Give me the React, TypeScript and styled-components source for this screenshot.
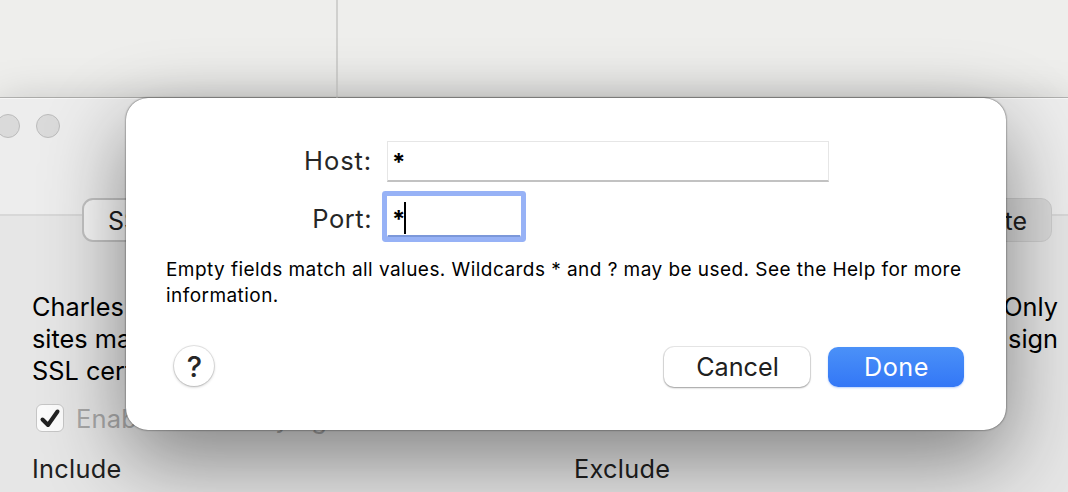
import React from "react";
import styled, { createGlobalStyle } from "styled-components";

const GlobalStyle = createGlobalStyle`
  * { box-sizing: border-box; }
  body { margin: 0; font-family: Inter, "Liberation Sans", sans-serif; overflow: hidden; }
`;

const Desktop = styled.div`
  position: relative;
  width: 1068px;
  height: 492px;
  overflow: hidden;
  background: #eeeeec;
`;

const BackPanes = styled.div`
  display: flex;
  height: 98px;
`;

const Pane = styled.div<{ $width?: number }>`
  flex: ${(p) => (p.$width ? `0 0 ${p.$width}px` : "1")};
  border-right: ${(p) => (p.$width ? "2px solid #d0d0ce" : "none")};
`;

const SettingsWindow = styled.section`
  height: 394px;
  background: #e6e6e6;
  border-top: 1px solid #f6f6f6;
  box-shadow: 0 0 0 1px rgba(0, 0, 0, 0.22), 0 10px 44px rgba(0, 0, 0, 0.26);
`;

const TitleBar = styled.div`
  display: flex;
  gap: 16px;
  height: 100px;
  padding-top: 15px;
  margin-left: -4px;
`;

const TrafficLight = styled.span`
  width: 24px;
  height: 24px;
  border-radius: 50%;
  background: #dadada;
  border: 1px solid #bcbcbc;
`;

const Header = styled.div`
  height: 117px;
  background: #ededed;
  border-bottom: 2px solid #d8d8d8;
`;

const TabStrip = styled.div`
  display: flex;
  justify-content: space-between;
  height: 44px;
  margin: -18px 16px 0 82px;
`;

const Tab = styled.div<{ $active?: boolean }>`
  display: flex;
  align-items: center;
  justify-content: ${(p) => (p.$active ? "flex-start" : "flex-end")};
  width: 300px;
  padding: ${(p) => (p.$active ? "2px 24px 0" : "2px 24px 0")};
  font-size: 25px;
  color: #1e1e1e;
  border-radius: 11px;
  background: ${(p) => (p.$active ? "#f8f8f8" : "#dadada")};
  border: ${(p) => (p.$active ? "2px solid #c4c4c4" : "1px solid #cecece")};
`;

const Description = styled.div`
  display: flex;
  justify-content: space-between;
  margin: 49px 10px 0 32px;
  font-size: 25.3px;
  line-height: 32px;
  color: #000;
`;

const Lines = styled.div<{ $end?: boolean }>`
  display: flex;
  flex-direction: column;
  align-items: ${(p) => (p.$end ? "flex-end" : "flex-start")};
`;

const CheckRow = styled.div`
  display: flex;
  align-items: center;
  gap: 12px;
  height: 30px;
  margin: 16px 0 0 36px;
  font-size: 25.5px;
  letter-spacing: 0.15px;
  color: #a8a8a8;
`;

const Checkbox = styled.span`
  display: flex;
  width: 28px;
  height: 28px;
  border-radius: 6px;
  background: #fbfbfb;
  border: 1px solid #c6c6c6;
`;

const ListHeadings = styled.div`
  display: flex;
  margin: 20px 0 0 32px;
  font-size: 25.3px;
  line-height: 32px;
  letter-spacing: 0.3px;
  color: #202020;
`;

const ListHeading = styled.span`
  flex: 0 0 542px;
`;

const Sheet = styled.form`
  position: absolute;
  left: 126px;
  top: 98px;
  width: 880px;
  height: 332px;
  padding: 43px 42px 0 40px;
  border-radius: 22px;
  background: #fff;
  box-shadow: 0 0 2px rgba(0, 0, 0, 0.75), 0 30px 82px rgba(0, 0, 0, 0.44);
`;

const Field = styled.div<{ $last?: boolean }>`
  display: flex;
  align-items: center;
  height: 41px;
  margin-bottom: ${(p) => (p.$last ? 0 : 14)}px;
`;

const Label = styled.label<{ $shift: string; $spacing: number }>`
  width: 206px;
  margin-right: 15px;
  padding: ${(p) => p.$shift};
  text-align: right;
  white-space: nowrap;
  font-size: 25.5px;
  letter-spacing: ${(p) => p.$spacing}px;
  color: #262626;
`;

const Input = styled.div<{ $width: number; $focused?: boolean }>`
  display: flex;
  align-items: center;
  width: ${(p) => p.$width}px;
  height: 41px;
  padding-left: 4px;
  font-size: 24px;
  font-weight: 700;
  color: #000;
  border: 1px solid #e6e6e6;
  border-bottom: 2px solid #c2c2c2;
  ${(p) =>
    p.$focused &&
    `border-color: #fff; border-bottom-color: #7c98da;
     border-radius: 1px; box-shadow: 0 0 0 5px #97b2f6;`}
`;

const Value = styled.span<{ $drop: number }>`
  padding-top: ${(p) => p.$drop}px;
`;

const Caret = styled.span`
  width: 2px;
  height: 32px;
  margin: 3px 0 0 -1px;
  background: #000;
`;

const Hint = styled.p`
  margin: 20px 0 0;
  font-size: 19px;
  line-height: 26px;
  letter-spacing: 0.45px;
  color: #000;
  white-space: nowrap;
`;

const Actions = styled.div`
  display: flex;
  align-items: center;
  height: 42px;
  margin-top: 37px;
  padding-left: 8px;
`;

const HelpButton = styled.button`
  width: 40px;
  height: 40px;
  margin: 0 auto 2px 0;
  padding: 0 0 0 1px;
  border: 0;
  border-radius: 50%;
  font: 500 29px/41px Inter, sans-serif;
  color: #262626;
  background: #fff;
  box-shadow: 0 0 0 1px rgba(0, 0, 0, 0.09), 0 1px 3px rgba(0, 0, 0, 0.25);
`;

const Button = styled.button<{ $primary?: boolean }>`
  width: ${(p) => (p.$primary ? 136 : 146)}px;
  height: 40px;
  margin-left: 18px;
  padding: 0 0 0 1px;
  border: 0;
  border-radius: 10px;
  font: 400 25.2px/40px Inter, sans-serif;
  letter-spacing: ${(p) => (p.$primary ? 0.6 : 0)}px;
  color: ${(p) => (p.$primary ? "#fff" : "#202020")};
  background: ${(p) => (p.$primary ? "linear-gradient(#4b91f8, #3377f6)" : "#fff")};
  box-shadow: ${(p) =>
    p.$primary
      ? "0 1px 2px rgba(51,119,246,.35)"
      : "0 0 0 1px rgba(0,0,0,.09), 0 1px 2px rgba(0,0,0,.32)"};
`;

export default function App() {
  return (
    <>
      <GlobalStyle />
      <Desktop>
        <BackPanes>
          <Pane $width={338} />
          <Pane />
        </BackPanes>
        <SettingsWindow>
          <Header>
            <TitleBar>
              <TrafficLight />
              <TrafficLight />
            </TitleBar>
          </Header>
          <TabStrip>
            <Tab $active>SSL</Tab>
            <Tab>Root Certificate</Tab>
          </TabStrip>
          <Description>
            <Lines>
              <span>Charles</span>
              <span>sites may</span>
              <span>SSL certs</span>
            </Lines>
            <Lines $end>
              <span>Only</span>
              <span>sign</span>
            </Lines>
          </Description>
          <CheckRow>
            <Checkbox>
              <svg width="26" height="26" viewBox="0 0 26 26" fill="none">
                <path d="M5.5 14.5 L11 20 L20.5 6.5" stroke="#222" strokeWidth="4" strokeLinecap="round" strokeLinejoin="round" />
              </svg>
            </Checkbox>
            Enable SSL Proxying
          </CheckRow>
          <ListHeadings>
            <ListHeading>Include</ListHeading>
            <span>Exclude</span>
          </ListHeadings>
        </SettingsWindow>
        <Sheet>
          <Field>
            <Label $spacing={0.9} $shift="0 0 2px">Host:</Label>
            <Input $width={442}>
              <Value $drop={3}>*</Value>
            </Input>
          </Field>
          <Field $last>
            <Label $spacing={0.5} $shift="3px 0 0">Port:</Label>
            <Input $width={134} $focused>
              <Value $drop={6}>*</Value>
              <Caret />
            </Input>
          </Field>
          <Hint>
            Empty fields match all values. Wildcards * and ? may be used. See the Help for more
            <br />
            information.
          </Hint>
          <Actions>
            <HelpButton type="button">?</HelpButton>
            <Button type="button">Cancel</Button>
            <Button type="button" $primary>Done</Button>
          </Actions>
        </Sheet>
      </Desktop>
    </>
  );
}
